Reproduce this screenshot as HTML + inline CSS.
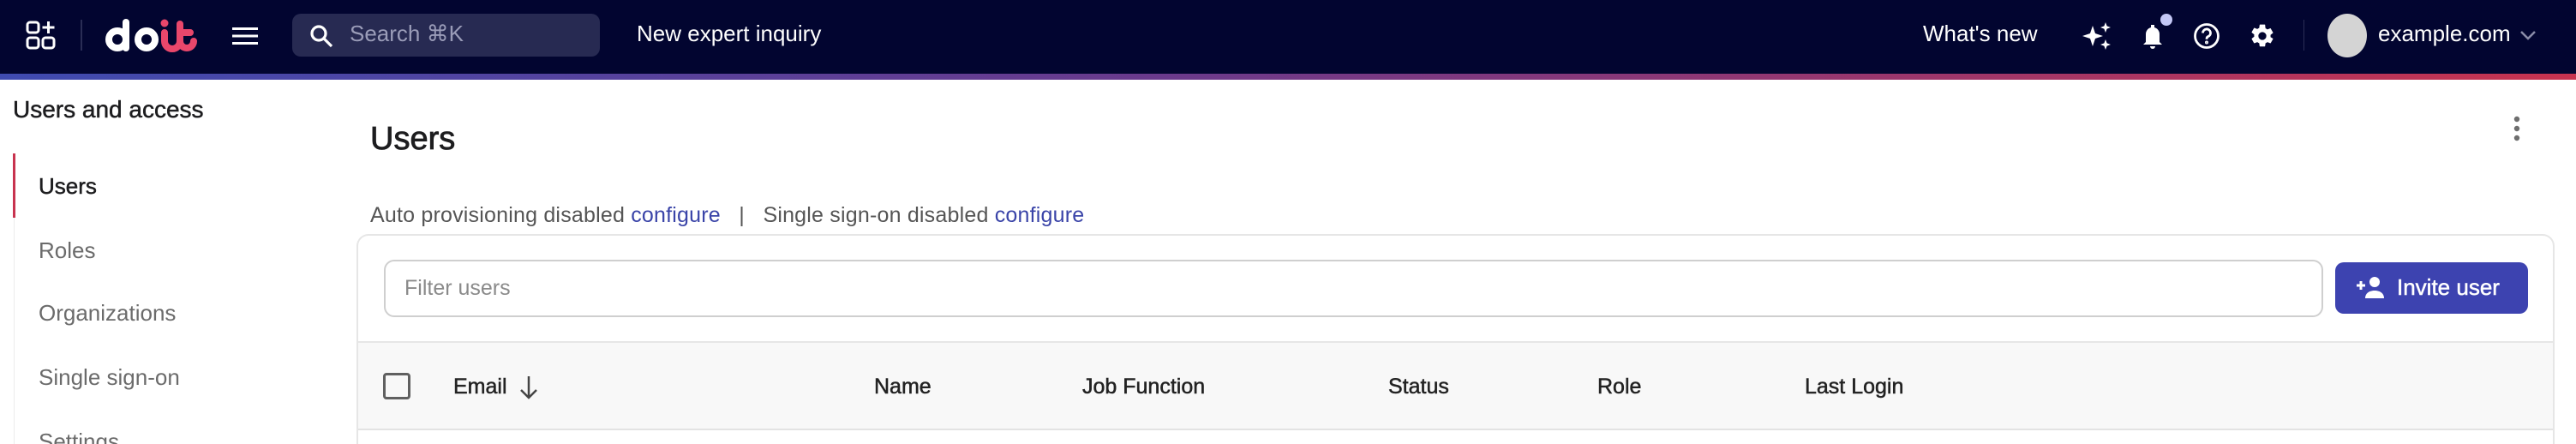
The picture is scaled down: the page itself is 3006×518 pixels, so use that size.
<!DOCTYPE html>
<html><head><meta charset="utf-8"><style>
*{margin:0;padding:0;box-sizing:border-box}
html,body{width:3006px;height:518px;overflow:hidden}
body{background:#fff;font-family:"Liberation Sans",sans-serif;color:#1d1d1f}
#w{position:relative;width:3006px;height:518px;overflow:hidden}
.a{position:absolute;white-space:nowrap}
.hdr{position:absolute;left:0;top:0;width:3006px;height:86px;background:#020530}
.grad{position:absolute;left:0;top:86px;width:3006px;height:7px;background:linear-gradient(90deg,#3f4bb0,#6a3a8c 45%,#c8334f)}
.med{-webkit-text-stroke:0.5px currentColor}
.nav{font-size:26px;color:#6b6b6b}
.th{font-size:25px;color:#222;top:437px}
</style></head><body><div id="w">
<div class="hdr"></div><div class="grad"></div>
<svg class="a" style="left:29px;top:23px" width="38" height="36" viewBox="0 0 38 36" fill="none" stroke="#fff" stroke-width="3"><rect x="3" y="3" width="13" height="12" rx="3"/><rect x="3" y="21" width="13" height="12" rx="3"/><rect x="21" y="21" width="13" height="12" rx="3"/><path d="M27.5 2v14M20.5 9h14"/></svg>
<div class="a" style="left:94px;top:23px;width:2px;height:36px;background:#2a2d55"></div>
<svg class="a" style="left:122px;top:20px" width="112" height="42" viewBox="0 0 112 42"><g fill="none" stroke-width="8" stroke-linecap="round"><circle cx="15" cy="26" r="10" stroke="#fff"/><path d="M25 6v30" stroke="#fff"/><circle cx="49" cy="26" r="10" stroke="#fff"/><path d="M70 18v10a9 9 0 0 0 18 0V8M88 18h12M88 28a8 8 0 0 0 16 0" stroke="#e9476b"/></g><circle cx="70" cy="7" r="4.5" fill="#e9476b"/></svg>
<svg class="a" style="left:271px;top:31px" width="30" height="22" viewBox="0 0 30 22" fill="#fff"><rect y="1" width="30" height="3"/><rect y="9.5" width="30" height="3"/><rect y="18" width="30" height="3"/></svg>
<div class="a" style="left:341px;top:16px;width:359px;height:50px;border-radius:10px;background:#272a52"></div>
<svg class="a" style="left:360px;top:27px" width="30" height="30" viewBox="0 0 30 30" fill="none" stroke="#fff" stroke-width="3.2"><circle cx="12" cy="12" r="8"/><path d="M18 18l9 9"/></svg>
<div class="a" style="left:408px;top:24px;font-size:26px;color:#9a9cb8">Search ⌘K</div>
<div class="a" style="left:743px;top:24px;font-size:26px;color:#fff">New expert inquiry</div>
<div class="a" style="left:2244px;top:24px;font-size:26px;color:#fff">What's new</div>
<svg class="a" style="left:2429px;top:24px" width="36" height="36" viewBox="0 0 36 36" fill="#fff"><path d="M13 6l3 9 9 3-9 3-3 9-3-9-9-3 9-3z"/><path d="M28 2l1.6 4.4L34 8l-4.4 1.6L28 14l-1.6-4.4L22 8l4.4-1.6z"/><path d="M28 22l1.6 4.4L34 28l-4.4 1.6L28 34l-1.6-4.4L22 28l4.4-1.6z"/></svg>
<svg class="a" style="left:2496px;top:26px" width="32" height="32" viewBox="0 0 32 32" fill="#fff"><path d="M14 3h4v3a8 8 0 0 1 6 8v9l3 3H5l3-3v-9a8 8 0 0 1 6-8z"/><path d="M13 28h6a3 3 0 0 1-6 0z"/></svg>
<div class="a" style="left:2521px;top:16px;width:14px;height:14px;border-radius:50%;background:#c4c8f6"></div>
<svg class="a" style="left:2559px;top:26px" width="32" height="32" viewBox="0 0 32 32" fill="none" stroke="#fff" stroke-width="2.8"><circle cx="16" cy="16" r="13.5"/><path d="M11.5 12.5a4.5 4.5 0 1 1 6 4.2c-1.3.6-1.5 1.4-1.5 3"/><circle cx="16" cy="23.5" r="0.6" fill="#fff"/></svg>
<svg class="a" style="left:2624px;top:26px" width="32" height="32" viewBox="0 0 24 24" fill="#fff"><path d="M19.14 12.94a7 7 0 0 0 0-1.88l2.03-1.58a.5.5 0 0 0 .12-.61l-1.92-3.32a.5.5 0 0 0-.59-.22l-2.39.96a7 7 0 0 0-1.62-.94l-.36-2.54A.5.5 0 0 0 13.92 2h-3.84a.5.5 0 0 0-.49.42l-.36 2.54a7 7 0 0 0-1.62.94l-2.39-.96a.5.5 0 0 0-.59.22L2.71 8.48a.5.5 0 0 0 .12.61l2.03 1.58a7 7 0 0 0 0 1.88l-2.03 1.58a.5.5 0 0 0-.12.61l1.92 3.32c.12.22.37.29.59.22l2.39-.96c.5.38 1.04.7 1.62.94l.36 2.54c.05.24.25.42.49.42h3.84c.24 0 .44-.18.49-.42l.36-2.54a7 7 0 0 0 1.62-.94l2.39.96c.22.08.47 0 .59-.22l1.92-3.32a.5.5 0 0 0-.12-.61zM12 15.5a3.5 3.5 0 1 1 0-7 3.5 3.5 0 0 1 0 7z"/></svg>
<div class="a" style="left:2688px;top:23px;width:1px;height:36px;background:#2a2d55"></div>
<div class="a" style="left:2716px;top:16px;width:46px;height:51px;border-radius:50%;background:#d4d4d4"></div>
<div class="a" style="left:2775px;top:24px;font-size:26px;color:#fff">example.com</div>
<svg class="a" style="left:2940px;top:34px" width="20" height="14" viewBox="0 0 20 14" fill="none" stroke="#8a8ca8" stroke-width="2.5"><path d="M2 3l8 8 8-8"/></svg>

<div class="a med" style="left:15px;top:112px;font-size:28px;color:#1d1d1f">Users and access</div>
<div class="a" style="left:16px;top:179px;width:1px;height:339px;background:#ececec"></div>
<div class="a" style="left:15px;top:179px;width:3px;height:75px;background:#c8334f"></div>
<div class="a med" style="left:45px;top:202px;font-size:26px;color:#1d1d1f">Users</div>
<div class="a nav" style="left:45px;top:277px">Roles</div>
<div class="a nav" style="left:45px;top:350px">Organizations</div>
<div class="a nav" style="left:45px;top:425px">Single sign-on</div>
<div class="a nav" style="left:45px;top:500px;height:18px;overflow:hidden">Settings</div>

<div class="a" style="left:432px;top:141px;font-size:38px;color:#1d1d1f;-webkit-text-stroke:0.8px #1d1d1f">Users</div>
<svg class="a" style="left:2931px;top:135px" width="12" height="32" viewBox="0 0 12 32" fill="#6e6e6e"><circle cx="6" cy="4" r="3.2"/><circle cx="6" cy="15" r="3.2"/><circle cx="6" cy="26" r="3.2"/></svg>
<div class="a" style="left:432px;top:237px;font-size:25px;letter-spacing:0.2px;color:#555">Auto provisioning disabled <span style="color:#3a44a8">configure</span> &nbsp;&nbsp;|&nbsp;&nbsp; Single sign-on disabled <span style="color:#3a44a8">configure</span></div>
<div class="a" style="left:416px;top:273px;width:2565px;height:245px;border:2px solid #e6e6e6;border-bottom:none;border-radius:14px 14px 0 0"></div>
<div class="a" style="left:448px;top:303px;width:2263px;height:67px;border:2px solid #cfcfcf;border-radius:12px"></div>
<div class="a" style="left:472px;top:322px;font-size:25px;color:#8a8a8a">Filter users</div>
<div class="a" style="left:2725px;top:306px;width:225px;height:60px;border-radius:10px;background:#3d43b0"></div>
<svg class="a" style="left:2748px;top:321px" width="36" height="28" viewBox="0 0 36 28" fill="#fff"><path d="M2 12h10M7 7v10" stroke="#fff" stroke-width="3"/><circle cx="23" cy="8" r="6"/><path d="M12 27c0-6 5-9 11-9s11 3 11 9z"/></svg>
<div class="a med" style="left:2797px;top:320px;font-size:26px;color:#fff">Invite user</div>
<div class="a" style="left:418px;top:398px;width:2561px;height:104px;background:#f8f8f8;border-top:2px solid #e6e6e6;border-bottom:2px solid #e3e3e3"></div>
<div class="a" style="left:447px;top:435px;width:32px;height:31px;border:3px solid #606060;border-radius:4px"></div>
<div class="a th med" style="left:529px">Email</div>
<svg class="a" style="left:605px;top:437px" width="24" height="30" viewBox="0 0 24 30" fill="none" stroke="#444" stroke-width="2.5"><path d="M12 2v25M3 18l9 9 9-9"/></svg>
<div class="a th med" style="left:1020px">Name</div>
<div class="a th med" style="left:1263px">Job Function</div>
<div class="a th med" style="left:1620px">Status</div>
<div class="a th med" style="left:1864px">Role</div>
<div class="a th med" style="left:2106px">Last Login</div>
</div></body></html>
